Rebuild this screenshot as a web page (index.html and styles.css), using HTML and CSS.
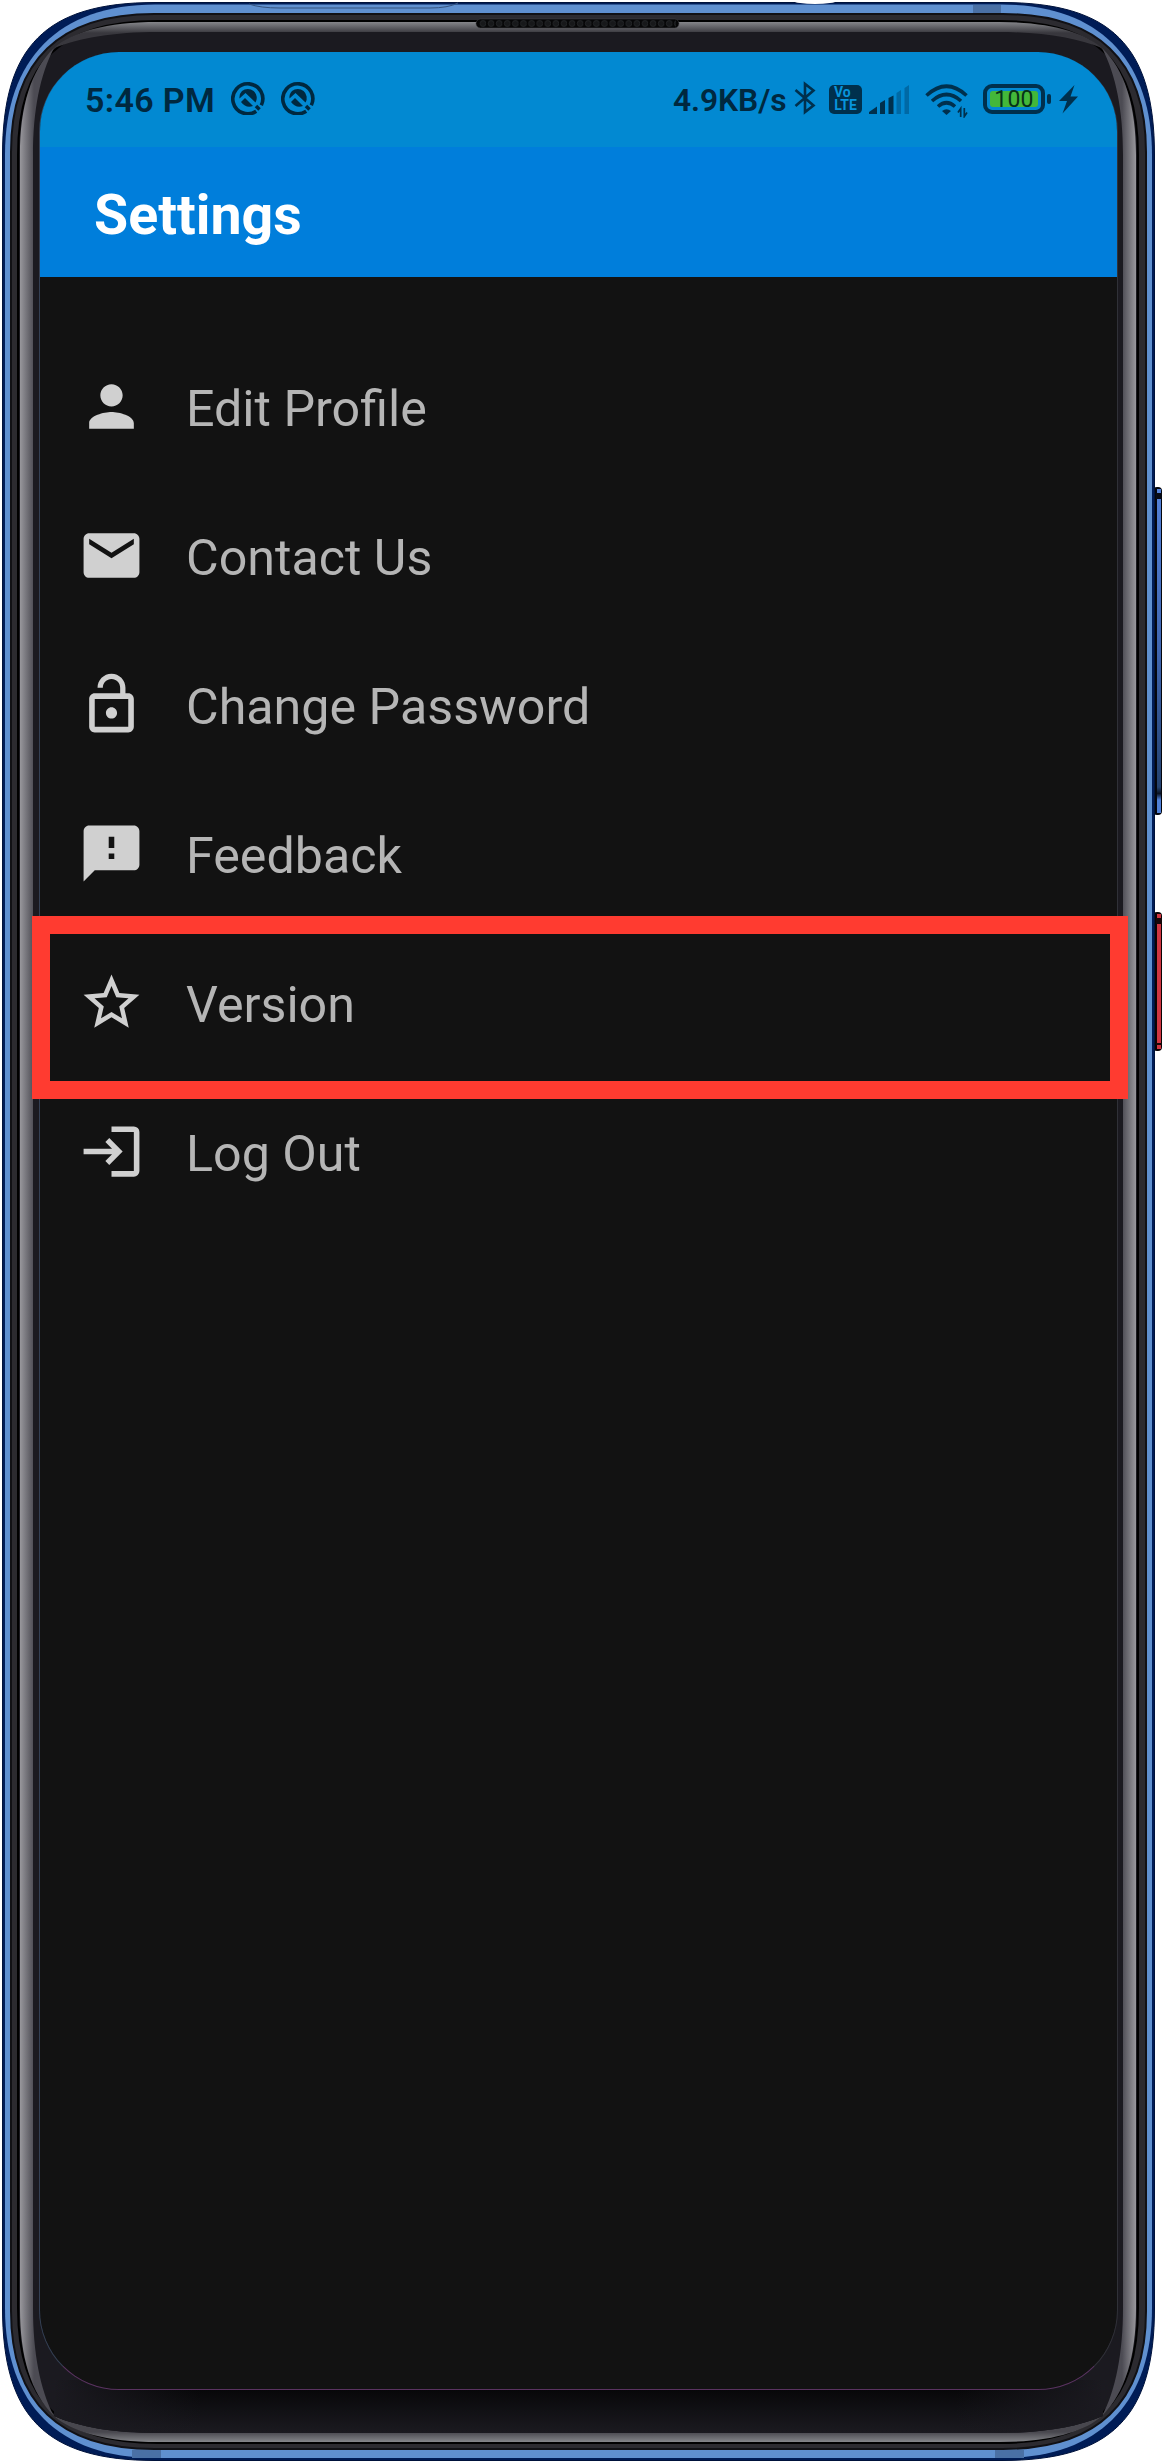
FILE: index.html
```html
<!DOCTYPE html>
<html lang="en">
<head>
<meta charset="utf-8">
<title>Settings</title>
<link rel="stylesheet" href="styles.css">
</head>
<body>
<div class="phone">
  <svg class="frame" viewBox="0 0 1162 2462" aria-hidden="true">
    <defs>
      <linearGradient id="gl" gradientUnits="userSpaceOnUse" x1="20" x2="34" y1="0" y2="0"><stop offset="0" stop-color="#98979c"/><stop offset="1" stop-color="#4c4b53"/></linearGradient>
      <linearGradient id="gr" gradientUnits="userSpaceOnUse" x1="1122" x2="1136" y1="0" y2="0"><stop offset="0" stop-color="#4c4b53"/><stop offset="1" stop-color="#98979c"/></linearGradient>
      <linearGradient id="gt" gradientUnits="userSpaceOnUse" x1="0" x2="0" y1="22" y2="33"><stop offset="0" stop-color="#85868a"/><stop offset="1" stop-color="#38373d"/></linearGradient>
      <linearGradient id="gb" gradientUnits="userSpaceOnUse" x1="0" x2="0" y1="2432" y2="2442"><stop offset="0" stop-color="#48474e"/><stop offset="1" stop-color="#85868a"/></linearGradient>
      <linearGradient id="chin" x2="0" y2="1"><stop offset="0" stop-color="#030304"/><stop offset="1" stop-color="#1b1a20"/></linearGradient>
      <linearGradient id="edge" gradientUnits="userSpaceOnUse" x1="54" y1="0" x2="1103" y2="0"><stop offset="0" stop-color="#1b1a20"/><stop offset=".14" stop-color="#1b1a20" stop-opacity="0"/><stop offset=".86" stop-color="#1b1a20" stop-opacity="0"/><stop offset="1" stop-color="#1b1a20"/></linearGradient>
      <linearGradient id="vol" x2="0" y2="1"><stop offset="0" stop-color="#5381d8"/><stop offset=".5" stop-color="#4066b0"/><stop offset=".92" stop-color="#24426f"/><stop offset=".94" stop-color="#0a1222"/><stop offset=".96" stop-color="#4f80d8"/></linearGradient>
      <pattern id="mesh" width="8.1" height="9" patternUnits="userSpaceOnUse" x="478" y="19"><circle cx="5" cy="4.5" r="3" fill="#17181a" stroke="#25272a" stroke-width=".8"/></pattern>
    </defs>
    <rect x="1153" y="487" width="9" height="328" rx="4" fill="#04060c"/>
    <rect x="1157" y="489" width="4" height="324" fill="url(#vol)"/>
    <rect x="1156" y="493" width="6" height="6" fill="#080b14"/>
    <rect x="1153" y="912" width="9" height="139" rx="4" fill="#0a0405"/>
    <rect x="1157" y="914" width="4" height="135" fill="#cf3642"/>
    <path d="M1156 918h6v6h-6zM1156 1043h6v2h-6z" fill="#16080a"/>
    <path fill="#001c56" stroke="#00123b" d="M2.500 155C2.500 46 46 2.500 155 2.500H1002C1111 2.500 1154.500 46 1154.500 155V2308C1154.500 2417 1111 2460.500 1002 2460.500H155C46 2460.500 2.500 2417 2.500 2308Z"/>
    <path fill="#5f90d0" d="M5 155C5 59 59 4.500 155 4.500H1002C1098 4.500 1152 59 1152 155V2308C1152 2404 1098 2458 1002 2458H155C59 2458 5 2404 5 2308Z"/>
    <path fill="#4a70a5" d="M973 5h28v8h-28zM132 2450h29v8h-29zM995 2450h29v8h-29z"/>
    <path fill="none" stroke="#34537f" d="M249 4Q260 8 280 8H430Q448 8 458 3"/>
    <ellipse cx="815" cy="1" rx="21" ry="3" fill="#fff"/>
    <path fill="#2c2b30" stroke="#111115" stroke-width="2" d="M11 152C11 60 60 14 154 14H1003C1097 14 1146 60 1146 152V2311C1146 2403 1097 2449 1003 2449H154C60 2449 11 2403 11 2311Z"/>
    <path fill="#1b1a20" stroke="#000" stroke-width="2" d="M18 155C18 61 61 21 158 21H999C1096 21 1138 61 1138 155V2308C1138 2402 1096 2443 999 2443H158C61 2443 18 2402 18 2308Z"/>
    <path fill="url(#gl)" d="M20 155C20 106 31 70 54 48C40 75 33 110 33 155V2308C33 2352 40 2390 54 2416C31 2393 20 2357 20 2308Z"/>
    <path fill="url(#gr)" d="M1136 155C1136 106 1125 70 1102 48C1116 75 1123 110 1123 155V2308C1123 2352 1116 2390 1102 2416C1125 2393 1136 2357 1136 2308Z"/>
    <path fill="url(#gt)" d="M158 22H999C1050 22 1084 32 1102 48C1076 38 1044 32 999 32H158C113 32 80 38 54 48C72 32 106 22 158 22Z"/>
    <path fill="url(#gb)" d="M158 2442H999C1050 2442 1084 2432 1102 2416C1076 2427 1044 2433 999 2433H158C113 2433 80 2427 54 2416C72 2432 106 2442 158 2442Z"/>
    <path fill="url(#chin)" d="M54 2380H1103V2416C1076 2427 1044 2433 999 2433H158C113 2433 80 2427 54 2416Z"/>
    <path fill="url(#edge)" d="M54 2380H1103V2416C1076 2427 1044 2433 999 2433H158C113 2433 80 2427 54 2416Z"/>
    <rect x="476" y="19" width="203" height="9" rx="4.500" fill="#060607" stroke="#48494d" stroke-width=".5"/>
    <rect x="479" y="19" width="197" height="9" fill="url(#mesh)"/>
  </svg>

  <main class="screen">
    <div class="status">
      <span class="clock">5:46 PM</span>
      <svg class="badge" viewBox="0 0 34 34"><use href="#quick"/></svg>
      <svg class="badge" viewBox="0 0 34 34">
        <g id="quick"><path d="M25.200 30.200A15 15 0 1 1 30.300 24.300" fill="none" stroke="#00283f" stroke-width="3.600"/><path d="M25 25l3.500 3.500" stroke="#00283f" stroke-width="3.600"/><path d="M11 10A9 9 0 0 1 24.500 21.500L14.500 12L8.500 17.500A9 9 0 0 1 11 10ZM14 17L22 25Q15 27.500 10 21Z" fill="#00283f"/></g>
      </svg>
      <span class="speed">4.9KB/s</span>
      <svg class="bluetooth" viewBox="0 0 22 34" fill="none" stroke="#00304d" stroke-width="2.600"><path d="M1.500 9L19.500 24.500L11 31V3L19.500 9.500L1.500 25"/></svg>
      <span class="volte"><span>Vo</span><span>LTE</span></span>
      <svg class="signal" viewBox="0 0 41 29" fill="#00304d"><path d="M0 29V27L8 21.500V29ZM11 29V18L16 15V29ZM19.500 29V13L24.500 10.500V29Z"/><path fill="#0069a5" d="M27.500 29V8L32 5V29ZM35.500 29V3L40 0V29Z"/></svg>
      <svg class="wifi" viewBox="0 0 44 34" fill="none" stroke="#00304d" stroke-width="3.600"><path d="M1.500 11.500Q21.500-7 41.500 11.500M7 17Q21.500 4 36 17M13 22.500Q21.500 15 30 22.500"/><path d="M17 27Q21.500 23.500 26 27L21.500 31Z" fill="#00304d" stroke="none"/><path d="M35.700 33V24.500L33 28.500M39.300 24V32.500L42 28.500" stroke-width="1.700"/></svg>
      <span class="battery"><span class="charge">100</span></span>
      <svg class="bolt" viewBox="0 0 19 30" fill="#00304d"><path d="M15.500 1L0 17H8L3.500 29.500L19 12.500H11.500Z"/></svg>
    </div>
    <header class="bar"><h1>Settings</h1></header>
    <nav class="menu">
      <a class="item"><svg class="icon" viewBox="0 0 24 24"><path d="M12 12c2.210 0 4-1.790 4-4s-1.790-4-4-4-4 1.790-4 4 1.790 4 4 4zm0 2c-2.670 0-8 1.340-8 4v2h16v-2c0-2.660-5.330-4-8-4z"/></svg>Edit Profile</a>
      <a class="item"><svg class="icon" viewBox="0 0 24 24"><path d="M20 4H4c-1.100 0-2 .9-2 2v12c0 1.100.9 2 2 2h16c1.100 0 2-.9 2-2V6c0-1.100-.9-2-2-2zm0 4-8 5-8-5V6l8 5 8-5v2z"/></svg>Contact Us</a>
      <a class="item"><svg class="icon" viewBox="0 0 24 24"><path d="M12 17c1.100 0 2-.9 2-2s-.9-2-2-2-2 .9-2 2 .9 2 2 2zm6-9h-1V6c0-2.760-2.240-5-5-5S7 3.240 7 6h1.900c0-1.710 1.390-3.100 3.100-3.100s3.100 1.390 3.100 3.100v2H6c-1.100 0-2 .9-2 2v10c0 1.100.9 2 2 2h12c1.100 0 2-.9 2-2V10c0-1.100-.9-2-2-2zm0 12H6V10h12v10z"/></svg>Change Password</a>
      <a class="item"><svg class="icon" viewBox="0 0 24 24"><path d="M20 2H4c-1.100 0-1.990.9-1.990 2L2 22l4-4h14c1.100 0 2-.9 2-2V4c0-1.100-.9-2-2-2zm-7 12h-2v-2h2v2zm0-4h-2V6h2v4z"/></svg>Feedback</a>
      <a class="item selected"><svg class="icon" viewBox="0 0 24 24"><path d="M22 9.240l-7.190-.62L12 2 9.190 8.630 2 9.240l5.460 4.730L5.820 21 12 17.270 18.180 21l-1.630-7.030L22 9.240zM12 15.400l-3.760 2.270 1-4.280-3.320-2.880 4.380-.38L12 6.100l1.710 4.040 4.380.38-3.320 2.880 1 4.280L12 15.400z"/></svg>Version</a>
      <a class="item"><svg class="icon" viewBox="0 0 24 24"><path d="M2 11h10.200L9.800 8.600 11.200 7.200 16 12l-4.800 4.800-1.400-1.400L12.200 13H2zM12 3h8a2 2 0 0 1 2 2v14a2 2 0 0 1-2 2h-8v-2h8V5h-8z"/></svg>Log Out</a>
    </nav>
  </main>
</div>
</body>
</html>
```
FILE: styles.css
```css
*, *::before, *::after { box-sizing: border-box; }
body { margin: 0; background: #fff; font-family: Roboto, "Liberation Sans", sans-serif; }
.phone { display: grid; width: 1162px; height: 2462px; overflow: hidden; }
.frame, .screen { grid-area: 1 / 1; }
.frame { display: block; width: 1162px; height: 2462px; }
.screen {
  z-index: 1;
  width: 1079px;
  height: 2338px;
  margin: 52px 0 0 39px;
  border: 1px solid;
  border-color: transparent #303138 #5a3360 #344054;
  border-top: 0;
  border-radius: 80px;
  background: #121212;
  background-clip: padding-box;
}
.status {
  display: flex;
  align-items: flex-start;
  height: 95px;
  padding: 29px 39px 0 45px;
  border-radius: 79px 79px 0 0;
  background: #0289d2;
  color: #00283f;
}
.clock { width: 146px; margin-top: -1px; font-size: 34px; font-weight: 600; line-height: 40px; letter-spacing: .35px; white-space: nowrap; }
.badge { width: 34px; height: 34px; margin-right: 16px; }
.speed { margin: 0 0 0 342px; width: 121px; font-size: 31.800px; font-weight: 600; line-height: 38px; letter-spacing: -.1px; white-space: nowrap; }
.bluetooth { width: 22px; height: 34px; }
.volte {
  display: flex; flex-direction: column; align-items: center;
  width: 33px; height: 29px; margin: 4px 7px 0 13px; border-radius: 5px;
  background: #00304d; color: #0794dc;
  font-size: 14px; font-weight: 700; line-height: 13px; padding-top: 1px;
}
.volte span:first-child { align-self: flex-start; padding-left: 5px; }
.signal { width: 41px; height: 29px; margin-top: 4px; }
.wifi { width: 44px; height: 34px; margin: 3px 14px 0 15px; }
.battery {
  position: relative;
  width: 62px; height: 30px; padding: 3px; margin-top: 3px;
  border: 4px solid #00304d; border-radius: 9px;
}
.battery::after { content: ""; position: absolute; right: -10px; top: 6px; width: 4px; height: 10px; border-radius: 2px; background: #00304d; }
.charge { display: block; height: 16px; border-radius: 3px; background: #43b83a; color: #073219; font-size: 23px; line-height: 18px; text-align: center; letter-spacing: .3px; }
.bolt { width: 19px; height: 30px; margin: 3px 0 0 14px; }
.bar { display: flex; align-items: center; height: 130px; padding: 0 54px; background: #007edb; color: #fff; }
.bar h1 { margin: 7px 0 0; font-size: 55.500px; font-weight: 700; line-height: 64px; }
.menu { display: flex; flex-direction: column; padding-top: 54px; }
.item { display: flex; align-items: center; gap: 41px; height: 149px; padding: 6px 0 0 38px; color: #b5b5b5; font-size: 50.200px; }
.icon { flex: none; width: 67px; height: 67px; margin-top: -5px; fill: #d0d0d0; }
.selected { position: relative; }
.selected::before { content: ""; position: absolute; left: -8px; top: -11px; width: 1096px; height: 183px; border: 18px solid #ff3b30; }
```
